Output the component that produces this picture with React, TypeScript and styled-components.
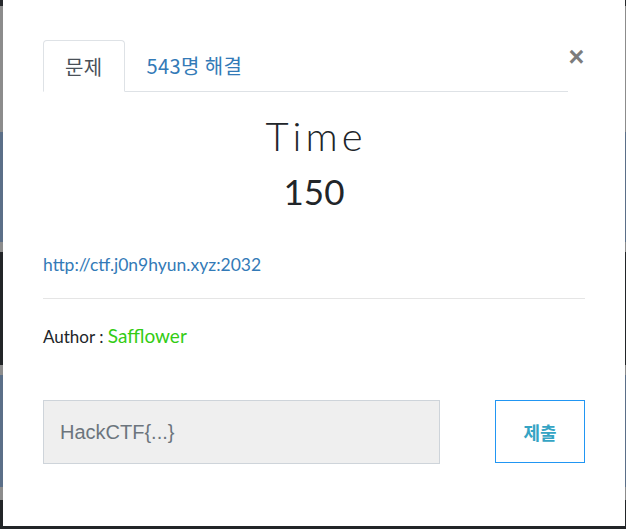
import React from "react";
import styled, { createGlobalStyle } from "styled-components";

const Global = createGlobalStyle`
  html, body {
    margin: 0;
    padding: 0;
    background: #1f2225;
  }
  * { box-sizing: border-box; }
`;

const Backdrop = styled.div`
  width: 626px;
  height: 529px;
  display: flex;
  padding: 0 1px 3px 3px;
  background: linear-gradient(
    to bottom,
    #26292c 0px,
    #26292c 6px,
    #8c8c8c 6px,
    #8c8c8c 132px,
    #5b6f88 132px,
    #5b6f88 242px,
    #8c8c8c 242px,
    #8c8c8c 252px,
    #222528 252px,
    #222528 365px,
    #8c8c8c 365px,
    #8c8c8c 375px,
    #5b6f88 375px,
    #5b6f88 487px,
    #8c8c8c 487px,
    #8c8c8c 500px,
    #222528 500px
  );
  overflow: hidden;
`;

const Modal = styled.div`
  flex: 1;
  background: #ffffff;
  padding: 40px 40px 0 40px;
  display: flex;
  flex-direction: column;
  font-family: Lato, "Noto Sans CJK KR", sans-serif;
  color: #212529;
`;

const Header = styled.div`
  display: flex;
  align-items: flex-start;
`;

const Tabs = styled.div`
  flex: 1;
  display: flex;
  height: 52px;
  border-bottom: 1px solid #dee2e6;
`;

const Tab = styled.div<{ $active?: boolean }>`
  height: ${(p) => (p.$active ? "52px" : "51px")};
  padding: 0 21px;
  display: flex;
  align-items: center;
  font-family: "Noto Sans CJK KR", sans-serif;
  font-size: 20px;
  letter-spacing: 0.4px;
  color: ${(p) => (p.$active ? "#495057" : "#337ab7")};
  background: #ffffff;
  border: 1px solid ${(p) => (p.$active ? "#dee2e6" : "transparent")};
  border-bottom-color: ${(p) => (p.$active ? "#ffffff" : "transparent")};
  border-radius: 4px 4px 0 0;
  margin-bottom: -1px;
`;

const Close = styled.button`
  width: 17px;
  margin-top: 6px;
  padding: 0;
  border: none;
  background: none;
  font-family: "Liberation Sans", Arial, sans-serif;
  font-weight: bold;
  font-size: 27px;
  line-height: 22px;
  color: #7c7c7c;
  cursor: pointer;
`;

const Title = styled.h1`
  margin: 20px 0 0 0;
  padding-left: 4px;
  text-align: center;
  font-family: Lato, sans-serif;
  font-weight: 300;
  font-size: 40px;
  line-height: 48px;
  letter-spacing: 4px;
  color: #212529;
`;

const Points = styled.div`
  margin-top: 10px;
  text-align: center;
  font-family: Lato, sans-serif;
  font-weight: 400;
  font-size: 35px;
  line-height: 43px;
  color: #212529;
`;

const Link = styled.a`
  margin-top: 42px;
  align-self: flex-start;
  font-family: Lato, sans-serif;
  font-size: 17.5px;
  line-height: 20px;
  color: #337ab7;
  text-decoration: none;
`;

const Divider = styled.hr`
  margin: 23px 0 0 0;
  border: none;
  border-top: 1px solid #e5e5e5;
  height: 0;
`;

const AuthorLine = styled.div`
  margin-top: 26px;
  font-family: Lato, sans-serif;
  font-size: 17px;
  line-height: 22px;
  color: #212529;
`;

const AuthorName = styled.span`
  font-size: 19px;
  color: #33cc14;
`;

const FormRow = styled.div`
  margin-top: 52px;
  display: flex;
  justify-content: space-between;
  align-items: flex-start;
`;

const FlagInput = styled.input`
  width: 397px;
  height: 64px;
  padding: 0 16px;
  background: #efefef;
  border: 1px solid #ced4da;
  border-radius: 0;
  font-family: "Liberation Sans", Arial, sans-serif;
  font-size: 20px;
  color: #495057;
  outline: none;
  &::placeholder {
    color: #6c757d;
  }
`;

const SubmitButton = styled.button`
  width: 90px;
  height: 63px;
  background: #ffffff;
  border: 1px solid #2196f3;
  border-radius: 0;
  font-family: "Noto Sans CJK KR", sans-serif;
  font-weight: 700;
  font-size: 18px;
  color: #35a4c4;
  cursor: pointer;
`;

export default function App() {
  return (
    <>
      <Global />
      <Backdrop>
        <Modal>
          <Header>
            <Tabs>
              <Tab $active>문제</Tab>
              <Tab>543명 해결</Tab>
            </Tabs>
            <Close aria-label="Close">×</Close>
          </Header>
          <Title>Time</Title>
          <Points>150</Points>
          <Link href="#">http://ctf.j0n9hyun.xyz:2032</Link>
          <Divider />
          <AuthorLine>
            Author : <AuthorName>Safflower</AuthorName>
          </AuthorLine>
          <FormRow>
            <FlagInput placeholder="HackCTF{...}" />
            <SubmitButton>제출</SubmitButton>
          </FormRow>
        </Modal>
      </Backdrop>
    </>
  );
}
